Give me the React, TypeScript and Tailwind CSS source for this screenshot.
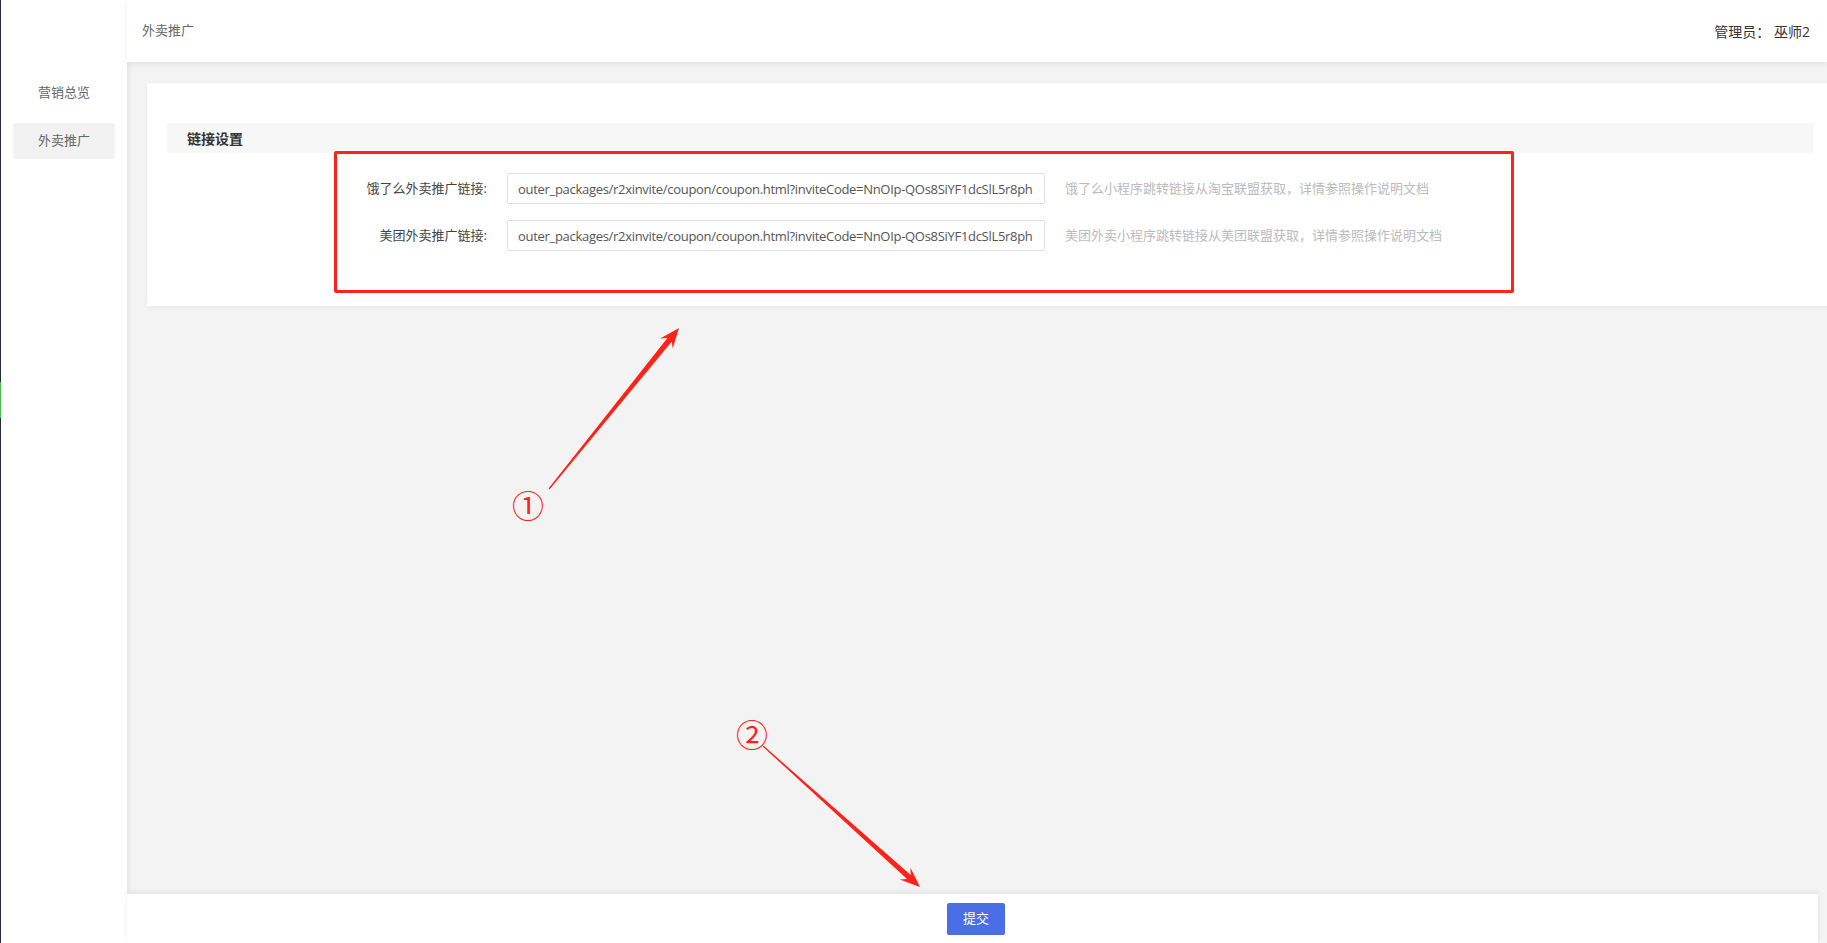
import React from 'react'

const FONT = '"Open Sans", "Noto Sans CJK SC", sans-serif'
const RED = '#ff2218'

const LINK = 'outer_packages/r2xinvite/coupon/coupon.html?inviteCode=NnOIp-QOs8SiYF1dcSlL5r8ph'

const rows = [
  { label: '饿了么外卖推广链接:', value: LINK, hint: '饿了么小程序跳转链接从淘宝联盟获取，详情参照操作说明文档' },
  { label: '美团外卖推广链接:', value: LINK, hint: '美团外卖小程序跳转链接从美团联盟获取，详情参照操作说明文档' },
]

// tapered screenshot-style arrow, thin at the start, notched head at the tip
function arrow(sx: number, sy: number, tx: number, ty: number) {
  const dx = tx - sx
  const dy = ty - sy
  const len = Math.hypot(dx, dy)
  const ux = dx / len
  const uy = dy / len
  const nx = -uy
  const ny = ux
  const at = (d: number, w: number) => `${(tx - ux * d + nx * w).toFixed(1)},${(ty - uy * d + ny * w).toFixed(1)}`
  return [
    `${(sx + nx * 0.6).toFixed(1)},${(sy + ny * 0.6).toFixed(1)}`,
    at(15, 2.8),
    at(20, 8),
    `${tx},${ty}`,
    at(20, -8),
    at(15, -2.8),
    `${(sx - nx * 0.6).toFixed(1)},${(sy - ny * 0.6).toFixed(1)}`,
  ].join(' ')
}

function Sidebar() {
  return (
    <aside className="flex h-full w-[127px] shrink-0 bg-white shadow-[2px_0_4px_rgba(0,0,0,0.06)] z-10">
      <div className="flex h-full w-px flex-col">
        <div className="h-[382px] bg-[#2b2a3a]" />
        <div className="h-[36px] bg-[#4cbb4c]" />
        <div className="flex-1 bg-[#2b2a3a]" />
      </div>
      <nav className="flex flex-1 flex-col gap-[12px] px-[12px] pt-[75px] text-[13px] text-[#666]">
        <div className="flex h-[36px] items-center justify-center">营销总览</div>
        <div className="flex h-[36px] items-center justify-center rounded-[3px] bg-[#f2f2f2]">外卖推广</div>
      </nav>
    </aside>
  )
}

export default function App() {
  return (
    <div className="relative flex h-[943px] w-[1827px] overflow-hidden bg-[#f3f3f3]" style={{ fontFamily: FONT }}>
      <Sidebar />

      <div className="flex min-w-0 flex-1 flex-col">
        <header className="z-10 flex h-[62px] shrink-0 items-center justify-between bg-white pl-[15px] pr-[17px] shadow-[0_2px_6px_rgba(0,0,0,0.08)]">
          <span className="text-[13px] text-[#666]">外卖推广</span>
          <span className="text-[14px] text-[#333]">管理员： 巫师2</span>
        </header>

        <main className="flex-1 pl-[20px] pt-[21px]">
          <section className="w-[1686px] bg-white px-[20px] pb-[55px] pt-[40px] shadow-[0_1px_4px_rgba(0,0,0,0.06)]">
            <div className="flex h-[30px] items-center bg-[#f7f7f7] pl-[20px] text-[14px] font-bold text-[#333]">
              链接设置
            </div>
            <div className="mt-[20px] flex flex-col gap-[16px]">
              {rows.map(row => (
                <div key={row.label} className="flex items-center">
                  <label className="w-[320px] text-right text-[13px] text-[#444]">{row.label}</label>
                  <input
                    readOnly
                    value={row.value}
                    className="ml-[20px] h-[31px] w-[538px] rounded-[2px] border border-[#dcdfe6] bg-white pl-[10px] pr-[6px] text-[13px] tracking-[-0.3px] text-[#555] outline-none"
                    style={{ fontFamily: FONT }}
                  />
                  <span className="ml-[20px] text-[13px] text-[#bbb]">{row.hint}</span>
                </div>
              ))}
            </div>
          </section>
        </main>

        <footer className="z-10 mr-[9px] flex h-[49px] shrink-0 items-center justify-center bg-white pl-[7px] shadow-[0_-2px_5px_rgba(0,0,0,0.07)]">
          <button className="h-[32px] w-[58px] rounded-[2px] bg-[#4a6ee6] text-[13px] text-white">提交</button>
        </footer>
      </div>

      {/* screenshot annotations */}
      <div className="pointer-events-none absolute left-[334px] top-[151px] h-[142px] w-[1180px] rounded-[2px] border-[3px] border-[#ff2218]" />
      <svg className="pointer-events-none absolute left-0 top-0" width={1827} height={943}>
        <polygon points={arrow(549, 489, 679, 328)} fill={RED} />
        <polygon points={arrow(763, 746, 920, 887)} fill={RED} />
      </svg>
      <span
        className="pointer-events-none absolute left-[512px] top-[484px] text-[32px] leading-[40px] text-[#ff2218]"
        style={{ fontFamily: '"Noto Sans CJK SC", sans-serif' }}
      >
        ①
      </span>
      <span
        className="pointer-events-none absolute left-[736px] top-[713px] text-[32px] leading-[40px] text-[#ff2218]"
        style={{ fontFamily: '"Noto Sans CJK SC", sans-serif' }}
      >
        ②
      </span>
    </div>
  )
}
